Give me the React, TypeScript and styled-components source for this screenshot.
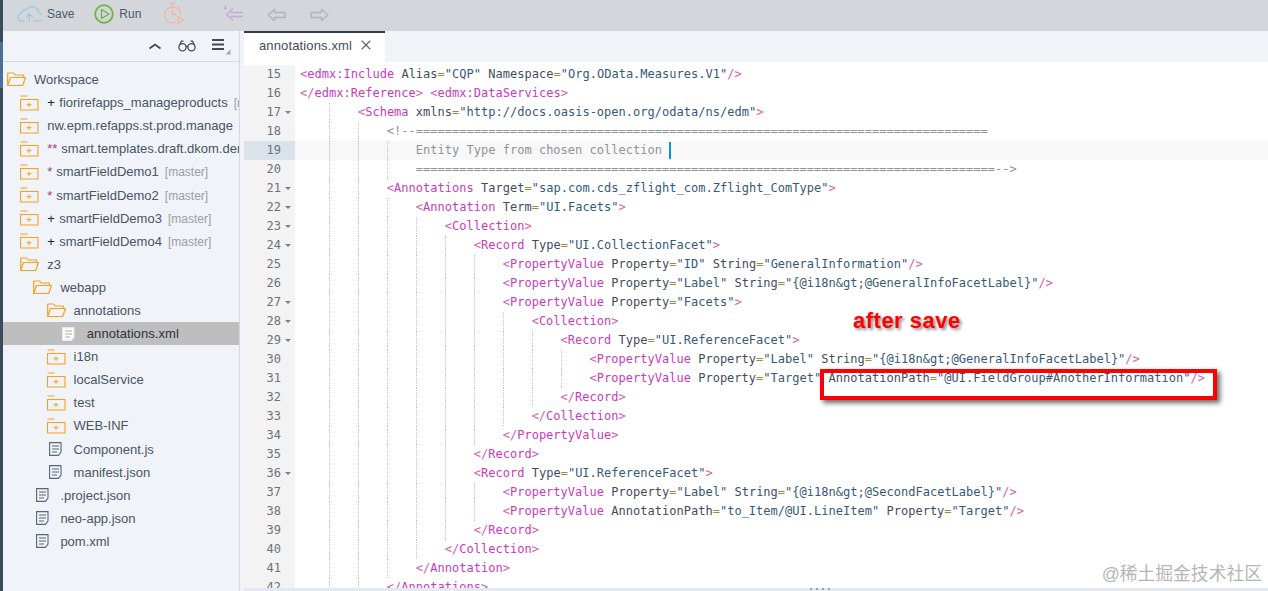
import styled, { createGlobalStyle } from 'styled-components';
import { X } from 'lucide-react';

const GlobalStyle = createGlobalStyle`
  html, body { margin: 0; padding: 0; height: 100%; overflow: hidden; background: #fff; }
  #root { height: 100%; }
`;

const Page = styled.div`
  display: flex;
  position: relative;
  width: 1268px;
  height: 591px;
  overflow: hidden;
  font-family: "Liberation Sans", Arial, sans-serif;
`;

const Strip = styled.div`
  width: 3px;
  flex: none;
  padding-top: 42px;
  background: #3b4a5d;
`;

const StripMark = styled.div`
  height: 46px;
  background: #4a7097;
`;

const Shell = styled.div`
  flex: 1;
  min-width: 0;
  display: flex;
  flex-direction: column;
`;

const Toolbar = styled.div`
  height: 31px;
  flex: none;
  box-sizing: border-box;
  display: flex;
  align-items: center;
  padding: 0 0 4px 14px;
  background: #d3d7dc;
`;

const ToolButton = styled.div<{ $gap: number; $drop?: number }>`
  display: flex;
  align-items: center;
  gap: 5px;
  margin-top: ${({ $drop }) => $drop ?? 0}px;
  margin-right: ${({ $gap }) => $gap}px;
  font-size: 12px;
  color: #4c5868;
`;

const Body = styled.div`
  flex: 1;
  min-height: 0;
  display: flex;
`;

const Sidebar = styled.aside`
  width: 237px;
  flex: none;
  box-sizing: border-box;
  background: #f0f3f8;
  border-right: 1px solid #d3d8df;
`;

const SideHead = styled.div`
  height: 30px;
  display: flex;
  align-items: center;
  justify-content: flex-end;
  gap: 16px;
  padding-right: 8px;
  border-bottom: 1px solid #d6dbe2;
`;

const Tree = styled.div`
  padding-top: 6px;
`;

const Row = styled.div<{ $depth: number; $selected?: boolean }>`
  height: 23.1px;
  display: flex;
  align-items: center;
  padding-left: ${({ $depth }) => 4 + $depth * 13.2}px;
  white-space: nowrap;
  overflow: hidden;
  font-size: 13px;
  letter-spacing: ${({ $selected }) => ($selected ? 0.07 : 0)}px;
  color: ${({ $selected }) => ($selected ? '#2b3340' : '#4a5464')};
  background: ${({ $selected }) => ($selected ? '#bebebe' : 'transparent')};
`;

const RowIcon = styled.span<{ $file: boolean }>`
  width: 27px;
  flex: none;
  box-sizing: border-box;
  display: flex;
  padding-left: ${({ $file }) => ($file ? 2.5 : 0)}px;
`;

const Mark = styled.span<{ $tone: 'added' | 'changed' }>`
  margin-right: ${({ $tone }) => ($tone === 'added' ? 4.5 : 4)}px;
  color: ${({ $tone }) => ($tone === 'added' ? '#222' : '#a0408f')};
`;

const Branch = styled.span`
  margin: 1px 0 0 6px;
  font-size: 12px;
  color: #9a9fa6;
`;

const EditorPane = styled.main`
  flex: 1;
  min-width: 0;
  display: flex;
  flex-direction: column;
  padding-left: 4px;
  background: #f0f3f8;
`;

const TabStrip = styled.div`
  height: 31px;
  flex: none;
  display: flex;
`;

const Tab = styled.div`
  width: 141px;
  box-sizing: border-box;
  display: flex;
  align-items: center;
  gap: 6px;
  padding: 0 0 5px 15px;
  font-size: 13px;
  letter-spacing: 0.13px;
  color: #414c5c;
  background: #fff;
  border-top: 2px solid #2f3c4d;
`;

const Code = styled.div`
  flex: 1;
  min-height: 0;
  overflow: hidden;
  padding-top: 2.5px;
  background: #fff;
  font-family: "DejaVu Sans Mono", monospace;
  font-size: 12px;
  line-height: 19px;
`;

const Line = styled.div<{ $active?: boolean }>`
  height: 19px;
  display: flex;
  background: ${({ $active }) => ($active ? '#f8f8f8' : 'transparent')};
`;

const Gutter = styled.div<{ $active?: boolean }>`
  width: 51px;
  flex: none;
  display: flex;
  justify-content: flex-end;
  padding-right: 14px;
  box-sizing: border-box;
  position: relative;
  color: #6d7278;
  background: ${({ $active }) => ($active ? '#dbe3ea' : '#f3f3f3')};
`;

const Fold = styled.span`
  position: absolute;
  right: 4px;
  top: 8px;
  border-left: 3px solid transparent;
  border-right: 3px solid transparent;
  border-top: 3px solid #7a7f85;
`;

const Source = styled.div`
  padding-left: 5px;
  display: flex;
  white-space: pre;
  letter-spacing: 0.015px;
`;

const Indent = styled.span`
  width: 28.96px;
  flex: none;
  box-sizing: border-box;
  & + & {
    border-left: 1px dotted #c2c2c2;
  }
`;

const Token = styled.span<{ $kind: string }>`
  color: ${({ $kind }) =>
    ({
      bracket: '#d45fae',
      tag: '#c93bbd',
      attr: '#3f4d5e',
      eq: '#a08a3c',
      value: '#35597a',
      comment: '#8f9499',
      plain: '#3f4d5e',
    })[$kind]};
`;

const Cursor = styled.span`
  width: 2px;
  height: 17px;
  margin: 1px 0 0 7px;
  background: #0a96dc;
`;

const ScrollEdge = styled.div`
  height: 3px;
  flex: none;
  display: flex;
  justify-content: center;
  gap: 4px;
  padding-left: 128px;
  background: #e4e8ef;
`;

const Grip = styled.i`
  width: 2px;
  height: 2px;
  background: #9aa0a8;
`;

const Callout = styled.div`
  position: absolute;
  left: 820px;
  top: 369px;
  width: 397px;
  height: 31px;
  box-sizing: border-box;
  border: 4px solid #f00;
  box-shadow: 3px 3px 5px rgba(0, 0, 0, 0.6);
`;

const CalloutLabel = styled.div`
  position: absolute;
  left: 853px;
  top: 308px;
  font-size: 22px;
  line-height: 25px;
  font-weight: 700;
  letter-spacing: 0.5px;
  color: #f00;
  text-shadow: 2px 2px 3px rgba(0, 0, 0, 0.45);
`;

const Watermark = styled.div`
  position: absolute;
  right: 6px;
  top: 563px;
  font-family: "Liberation Sans", "Noto Sans CJK SC", sans-serif;
  font-size: 17.8px;
  line-height: 22px;
  color: #a9a9a9;
  opacity: 0.85;
`;

const CloudIcon = () => (
  <svg width="25" height="18" viewBox="0 0 25 18" fill="none" stroke="#9ccde0" strokeWidth="1.4" strokeLinecap="round" strokeLinejoin="round">
    <path d="M7 16H5a4 4 0 0 1-.6-7.9A5.500 5.500 0 0 1 9.500 4.500 7 7 0 0 1 22 8a4 4 0 0 1-.5 8H17" />
    <path d="M12.300 16.500V9M9.500 11.500l2.800-2.800 2.800 2.800" />
  </svg>
);

const RunIcon = () => (
  <svg width="20" height="20" viewBox="0 0 20 20" fill="none">
    <circle cx="10" cy="10" r="8.800" stroke="#6db43f" strokeWidth="1.8" />
    <path d="M7.500 5.500 15 10l-7.500 4.500z" stroke="#6db43f" strokeWidth="1.300" strokeLinejoin="round" />
  </svg>
);

const TimerIcon = () => (
  <svg width="21" height="23" viewBox="0 0 21 23" fill="none" stroke="#efb8a0" strokeWidth="1.300" strokeLinecap="round">
    <path d="M6 1.500h5M8.500 1.500V4M14 4.500l1.500 1.500" />
    <path d="M11 20.700A8 8 0 1 1 16.500 12" />
    <path d="M8.500 7.500V12.500H12" />
    <path d="M14 14.500l5.500 3.500-5.500 3.500z" strokeLinejoin="round" />
  </svg>
);

const ArrowIcon = ({ flip, color }: { flip?: boolean; color: string }) => (
  <svg width="19" height="14" viewBox="0 0 19 14" fill="none" stroke={color} strokeWidth="1.300" strokeLinejoin="round" style={flip ? { transform: 'scaleX(-1)' } : undefined}>
    <path d="M1 7 7.500 1.500v3H18v5H7.500v3z" />
  </svg>
);

const StarArrowIcon = () => (
  <svg width="20" height="18" viewBox="0 0 20 18" fill="none" stroke="#c5a9d6" strokeWidth="1.300" strokeLinejoin="round">
    <path d="M9 3.500 2.500 9.500 9 15.500M6.500 7.500H19M6.500 11.500H19" />
    <path d="M0 1.500l3 2.500M3 1.500 0 4M1.500 .8v4" strokeWidth="1" />
  </svg>
);

const ChevronIcon = () => (
  <svg width="14" height="8" viewBox="0 0 14 8" fill="none" stroke="#3f4a59" strokeWidth="1.800">
    <path d="M1.500 6.500 7 2.500l5.500 4" />
  </svg>
);

const GlassesIcon = () => (
  <svg width="18" height="12" viewBox="0 0 18 12" fill="none" stroke="#44505f" strokeWidth="1.300">
    <circle cx="4.500" cy="7.300" r="3.600" />
    <circle cx="13.500" cy="7.300" r="3.600" />
    <path d="M8 6.500h2M1.500 5 3.500 1.200h2M16.500 5l-2-3.800h-2" />
  </svg>
);

const MenuIcon = () => (
  <svg width="19" height="17" viewBox="0 0 19 17" fill="none">
    <path d="M0 2h12M0 6.500h12M0 11h12" stroke="#3f4a59" strokeWidth="2" />
    <path d="M18.500 11.500v5h-5z" fill="#a4a8ae" />
  </svg>
);

const FolderPlusIcon = () => (
  <svg width="19" height="16" viewBox="0 0 19 16" fill="none" stroke="#f9a01e" strokeWidth="1.100">
    <path d="M.500 1h7M.500 4.500h17.500v10.500H.500z" />
    <path d="M6.500 9.700h5M9 7.500v4.500" strokeWidth="1" />
  </svg>
);

const FolderOpenIcon = () => (
  <svg width="19" height="15" viewBox="0 0 19 15" fill="none" stroke="#f9a01e" strokeWidth="1.200" strokeLinejoin="round">
    <path d="M.700 13.500V1h6l1.500 2h8.300v2.500" />
    <path d="M.700 13.500 3.500 5.500h15l-2.800 8z" />
  </svg>
);

const FileIcon = ({ selected }: { selected?: boolean }) => (
  <svg width="13" height="14" viewBox="0 0 13 14" fill={selected ? '#fff' : 'none'} stroke={selected ? '#e8e8e8' : '#5a6675'} strokeWidth="1.100">
    <path d="M.600.600H12v9.500L9.500 13.400H.600z" />
    <path d="M3 4h7M3 7h7M3 10h5" stroke={selected ? '#a8a8a8' : '#5a6675'} />
  </svg>
);

type TreeItem = {
  depth: number;
  name: string;
  kind: 'closed' | 'open' | 'file';
  mark?: string;
  branch?: string;
  selected?: boolean;
};

const treeItems: TreeItem[] = [
  { depth: 0, name: 'Workspace', kind: 'open' },
  { depth: 1, name: 'fiorirefapps_manageproducts', kind: 'closed', mark: '+', branch: '[master]' },
  { depth: 1, name: 'nw.epm.refapps.st.prod.manage', kind: 'closed' },
  { depth: 1, name: 'smart.templates.draft.dkom.demo', kind: 'closed', mark: '**' },
  { depth: 1, name: 'smartFieldDemo1', kind: 'closed', mark: '*', branch: '[master]' },
  { depth: 1, name: 'smartFieldDemo2', kind: 'closed', mark: '*', branch: '[master]' },
  { depth: 1, name: 'smartFieldDemo3', kind: 'closed', mark: '+', branch: '[master]' },
  { depth: 1, name: 'smartFieldDemo4', kind: 'closed', mark: '+', branch: '[master]' },
  { depth: 1, name: 'z3', kind: 'open' },
  { depth: 2, name: 'webapp', kind: 'open' },
  { depth: 3, name: 'annotations', kind: 'open' },
  { depth: 4, name: 'annotations.xml', kind: 'file', selected: true },
  { depth: 3, name: 'i18n', kind: 'closed' },
  { depth: 3, name: 'localService', kind: 'closed' },
  { depth: 3, name: 'test', kind: 'closed' },
  { depth: 3, name: 'WEB-INF', kind: 'closed' },
  { depth: 3, name: 'Component.js', kind: 'file' },
  { depth: 3, name: 'manifest.json', kind: 'file' },
  { depth: 2, name: '.project.json', kind: 'file' },
  { depth: 2, name: 'neo-app.json', kind: 'file' },
  { depth: 2, name: 'pom.xml', kind: 'file' },
];

type CodeLine = { level: number; text: string; fold?: boolean; comment?: boolean; active?: boolean };

const codeLines: CodeLine[] = [
  { level: 0, text: '<edmx:Include Alias="CQP" Namespace="Org.OData.Measures.V1"/>' },
  { level: 0, text: '</edmx:Reference> <edmx:DataServices>' },
  { level: 2, text: '<Schema xmlns="http://docs.oasis-open.org/odata/ns/edm">', fold: true },
  { level: 3, text: '<!--' + '='.repeat(79), comment: true },
  { level: 4, text: 'Entity Type from chosen collection', comment: true, active: true },
  { level: 4, text: '='.repeat(80) + '-->', comment: true },
  { level: 3, text: '<Annotations Target="sap.com.cds_zflight_com.Zflight_ComType">', fold: true },
  { level: 4, text: '<Annotation Term="UI.Facets">', fold: true },
  { level: 5, text: '<Collection>', fold: true },
  { level: 6, text: '<Record Type="UI.CollectionFacet">', fold: true },
  { level: 7, text: '<PropertyValue Property="ID" String="GeneralInformation"/>' },
  { level: 7, text: '<PropertyValue Property="Label" String="{@i18n&gt;@GeneralInfoFacetLabel}"/>' },
  { level: 7, text: '<PropertyValue Property="Facets">', fold: true },
  { level: 8, text: '<Collection>', fold: true },
  { level: 9, text: '<Record Type="UI.ReferenceFacet">', fold: true },
  { level: 10, text: '<PropertyValue Property="Label" String="{@i18n&gt;@GeneralInfoFacetLabel}"/>' },
  { level: 10, text: '<PropertyValue Property="Target" AnnotationPath="@UI.FieldGroup#AnotherInformation"/>' },
  { level: 9, text: '</Record>' },
  { level: 8, text: '</Collection>' },
  { level: 7, text: '</PropertyValue>' },
  { level: 6, text: '</Record>' },
  { level: 6, text: '<Record Type="UI.ReferenceFacet">', fold: true },
  { level: 7, text: '<PropertyValue Property="Label" String="{@i18n&gt;@SecondFacetLabel}"/>' },
  { level: 7, text: '<PropertyValue AnnotationPath="to_Item/@UI.LineItem" Property="Target"/>' },
  { level: 6, text: '</Record>' },
  { level: 5, text: '</Collection>' },
  { level: 4, text: '</Annotation>' },
  { level: 3, text: '</Annotations>' },
];

const tokenKind = (part: string) => {
  if (part === '<' || part === '</' || part === '>' || part === '/>') return 'bracket';
  if (part === '=') return 'eq';
  if (part.startsWith('"')) return 'value';
  return 'attr';
};

// tag brackets and names get their own colour, the rest is split on = and quotes
const renderTokens = (text: string) => {
  const parts = text.match(/<\/?|\/?>|=|"[^"]*"|\s+|[^\s=<>"/]+/g) ?? [];
  let afterBracket = false;
  return parts.map((part, i) => {
    const kind = afterBracket ? 'tag' : tokenKind(part);
    afterBracket = part === '<' || part === '</';
    return (
      <Token key={i} $kind={kind}>
        {part}
      </Token>
    );
  });
};

const TreeRow = ({ item }: { item: TreeItem }) => (
  <Row $depth={item.depth} $selected={item.selected}>
    <RowIcon $file={item.kind === 'file'}>
      {item.kind === 'closed' && <FolderPlusIcon />}
      {item.kind === 'open' && <FolderOpenIcon />}
      {item.kind === 'file' && <FileIcon selected={item.selected} />}
    </RowIcon>
    {item.mark && <Mark $tone={item.mark === '+' ? 'added' : 'changed'}>{item.mark}</Mark>}
    {item.name}
    {item.branch && <Branch>{item.branch}</Branch>}
  </Row>
);

export default function App() {
  return (
    <Page>
      <GlobalStyle />
      <Strip>
        <StripMark />
      </Strip>
      <Shell>
        <Toolbar>
          <ToolButton $gap={20}>
            <CloudIcon />
            Save
          </ToolButton>
          <ToolButton $gap={23}>
            <RunIcon />
            Run
          </ToolButton>
          <ToolButton $gap={39}>
            <TimerIcon />
          </ToolButton>
          <ToolButton $gap={23}>
            <StarArrowIcon />
          </ToolButton>
          <ToolButton $gap={24} $drop={2}>
            <ArrowIcon color="#abb3bc" />
          </ToolButton>
          <ToolButton $gap={0} $drop={2}>
            <ArrowIcon flip color="#abb3bc" />
          </ToolButton>
        </Toolbar>
        <Body>
          <Sidebar>
            <SideHead>
              <ChevronIcon />
              <GlassesIcon />
              <MenuIcon />
            </SideHead>
            <Tree>
              {treeItems.map((item) => (
                <TreeRow key={item.depth + item.name} item={item} />
              ))}
            </Tree>
          </Sidebar>
          <EditorPane>
            <TabStrip>
              <Tab>
                annotations.xml
                <X size={16} strokeWidth={1.6} color="#566170" />
              </Tab>
            </TabStrip>
            <Code>
              {codeLines.map((line, i) => (
                <Line key={i} $active={line.active}>
                  <Gutter $active={line.active}>
                    {15 + i}
                    {line.fold && <Fold />}
                  </Gutter>
                  <Source>
                    {Array.from({ length: line.level }, (_, n) => (
                      <Indent key={n} />
                    ))}
                    {line.comment ? <Token $kind="comment">{line.text}</Token> : renderTokens(line.text)}
                    {line.active && <Cursor />}
                  </Source>
                </Line>
              ))}
            </Code>
            <ScrollEdge>
              <Grip />
              <Grip />
              <Grip />
              <Grip />
            </ScrollEdge>
          </EditorPane>
        </Body>
      </Shell>
      <CalloutLabel>after save</CalloutLabel>
      <Callout />
      <Watermark>@稀土掘金技术社区</Watermark>
    </Page>
  );
}
